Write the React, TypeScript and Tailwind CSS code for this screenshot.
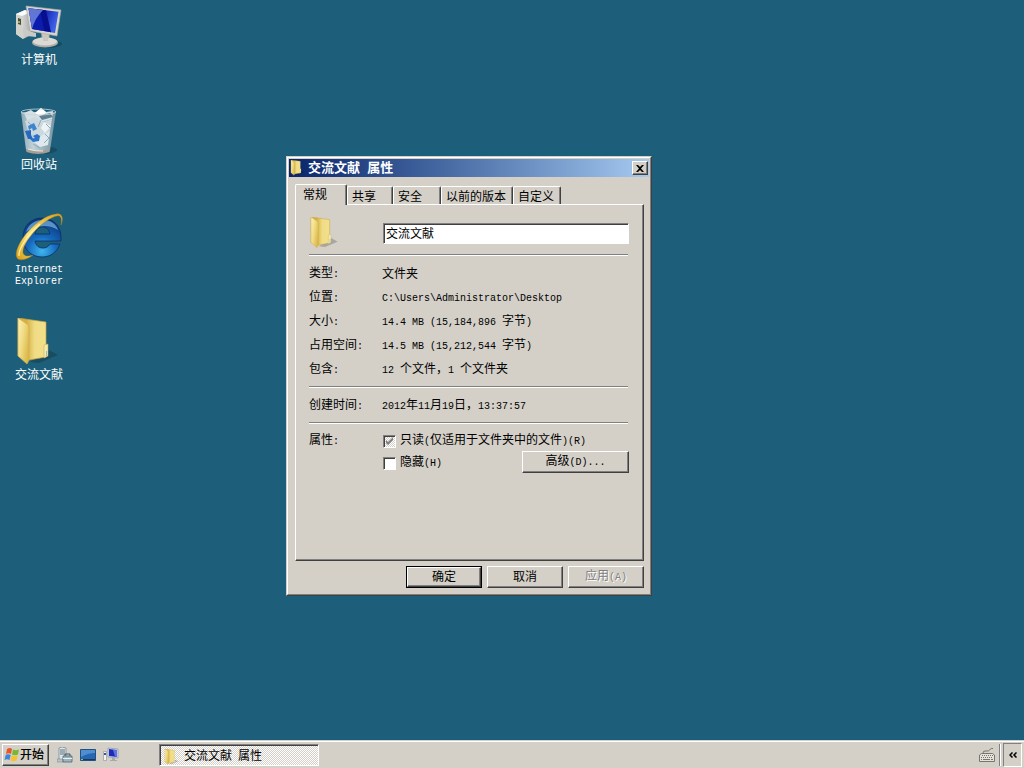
import { Fragment } from "react";
import type { ReactNode } from "react";

// Latin runs are set half as wide as the Chinese characters
const Mixed = ({ text }: { text: string }) => (
  <span className="whitespace-pre">
    {text.split(/([\x20-\x7e]+)/).map((part, i) =>
      i % 2 ? (
        <span key={i} className="font-['Liberation_Mono',monospace] text-[10px]">
          {part}
        </span>
      ) : (
        <Fragment key={i}>{part}</Fragment>
      )
    )}
  </span>
);

const ComputerIcon = () => (
  <svg viewBox="0 0 48 48" className="size-12" aria-hidden="true">
    <defs>
      <linearGradient id="screen" x1="0" y1="0" x2="1" y2="0.3">
        <stop offset="0" stopColor="#1a2fb4" />
        <stop offset="0.45" stopColor="#0a16a4" />
        <stop offset="1" stopColor="#3d62e6" />
      </linearGradient>
      <linearGradient id="tower" x1="0" y1="0" x2="1" y2="0">
        <stop offset="0" stopColor="#f4f4f2" />
        <stop offset="1" stopColor="#a9aaa8" />
      </linearGradient>
    </defs>
    <ellipse cx="33" cy="41" rx="14" ry="4" fill="#0d3c50" opacity="0.5" />
    <path d="M1 11 10 7 16 9V32L8 36 1 31Z" fill="url(#tower)" />
    <path d="M1 11 7 13 8 36 1 31Z" fill="#d2d2cc" />
    <path d="M1 11 7 13 16 9 10 7Z" fill="#fafafa" />
    <path d="M3 15 6 16V22L3 21Z" fill="#4a4d48" />
    <circle cx="4" cy="19" r="1" fill="#a5d62c" />
    <path d="M8 24 14 28 21 30V34L12 33 8 30Z" fill="#c9c9c6" />
    <path d="M26 29H35L34 37H27Z" fill="#b4b2ac" />
    <ellipse cx="30" cy="39.500" rx="13" ry="5" fill="#aeaca6" />
    <ellipse cx="30" cy="38.500" rx="12" ry="4" fill="#dcdad4" />
    <path d="M27 30H34L33 38H28Z" fill="#c9c7c0" />
    <path d="M11 3 46 7 42 33 15 28Z" fill="#d8d5cc" stroke="#a5a8a6" strokeWidth="0.6" />
    <path d="M13.500 5.200 43.500 8.800 40 30 17 26Z" fill="url(#screen)" />
    <path d="M13.500 5.200 25 6.600 29 28 17 26Z" fill="#0b1cae" />
    <path d="M25 6.600 31 7.300 36 29.300 29 28Z" fill="#080f8e" />
    <path d="M13.500 5.200 28 7Q20 15 17 26Z" fill="#a7c0f4" opacity="0.55" />
  </svg>
);

const RecycleIcon = () => (
  <svg viewBox="0 0 48 48" className="size-12" aria-hidden="true">
    <defs>
      <linearGradient id="bin" x1="0" y1="0" x2="1" y2="0">
        <stop offset="0" stopColor="#9fb6c1" />
        <stop offset="0.35" stopColor="#dfe7eb" />
        <stop offset="1" stopColor="#7f99a6" />
      </linearGradient>
    </defs>
    <ellipse cx="27" cy="42" rx="15" ry="4" fill="#0d3c50" opacity="0.5" />
    <path d="M6 4 11 42Q23 48 35 42L41 4Z" fill="url(#bin)" opacity="0.85" />
    <path d="M9 5 16 2 20 5 26 0 31 4 38 3 37 11 24 15 12 12Z" fill="#d5e0e5" />
    <path d="M20 5 26 0 31 4 27 9Z" fill="#fff" />
    <path d="M24 8 35 5 38 9 27 12Z" fill="#5c8192" />
    <path d="M10 13 20 9 29 14 37 11 35 23 26 28 14 26Z" fill="#cbd9df" />
    <path d="M29 14 36 18 30 25 26 20Z" fill="#eef3f5" />
    <path d="M27 27 35 23 33 37 25 39 19 34Z" fill="#dfe8ec" />
    <path d="M30 26 34 30 29 35M13 14 20 20M26 12 23 19M31 16 35 20M18 36 25 40" fill="none" stroke="#8eabb8" />
    <ellipse cx="23.500" cy="4" rx="17.500" ry="3" fill="none" stroke="#c3d4db" strokeWidth="0.8" />
    <path d="M13 18 19 15 22 21 18 23 17 20 14 22Z" fill="#3f84cf" />
    <path d="M10 23 16 22 16 27 18 31 13 31Z" fill="#2568bd" />
    <path d="M18 28 22 26 25 28 24 33 18 34 15 31 20 30Z" fill="#2d74c8" />
    <path d="M11 41Q23 45 35 41L34.500 44Q23 48 11.500 44Z" fill="#a59e96" />
    <path d="M13 41Q21 43.500 28 43" fill="none" stroke="#eee9e2" />
  </svg>
);

const ExplorerIcon = () => (
  <svg viewBox="0 0 48 48" className="size-12" aria-hidden="true">
    <defs>
      <radialGradient id="ie" cx="0.5" cy="0.85" r="0.85">
        <stop offset="0" stopColor="#3fb6ee" />
        <stop offset="0.45" stopColor="#1569bd" />
        <stop offset="1" stopColor="#0b3378" />
      </radialGradient>
      <linearGradient id="ring" x1="0" y1="1" x2="1" y2="0">
        <stop offset="0" stopColor="#d79a12" />
        <stop offset="0.4" stopColor="#fbe47c" />
        <stop offset="1" stopColor="#d8a21c" />
      </linearGradient>
    </defs>
    <path
      fillRule="evenodd"
      d="M27 5C38 5 46 13 46 24V28H20C21 33 24 35 28 35C31 35 33 34 35 31H45C42 39 36 44 27 44C16 44 8 36 8 24.500C8 13 16 5 27 5ZM20 21H35C34 16 31 14 27.500 14C24 14 21 16 20 21Z"
      fill="url(#ie)"
      stroke="#0a2e68"
      strokeWidth="0.8"
    />
    <path d="M11 19C14 10 21 7 28 7C36 7 41 11 43 17C34 11 21 12 11 19Z" fill="#9bd4f3" opacity="0.55" />
    <path
      d="M46 12C49 5 47 0 41 1C31 2 17 12 8 25C2 34 -1 43 3 46C6 48 13 46 18 42C12 44 9 43 8 40C7 35 12 27 19 19C27 10 36 4 42 3C46 2 47 6 46 12Z"
      fill="url(#ring)"
      stroke="#a9801b"
      strokeWidth="0.4"
    />
    <path d="M4 43C3 36 14 20 25 11" fill="none" stroke="#fff3ab" strokeWidth="1.200" />
  </svg>
);

const FolderIcon = ({ className }: { className: string }) => (
  <svg viewBox="0 0 48 48" className={className} aria-hidden="true">
    <defs>
      <linearGradient id="cover" x1="0" y1="0" x2="1" y2="0.6">
        <stop offset="0" stopColor="#fcf2b6" />
        <stop offset="0.5" stopColor="#f0dc85" />
        <stop offset="1" stopColor="#dcb94c" />
      </linearGradient>
      <linearGradient id="sheet" x1="0" y1="0" x2="1" y2="0">
        <stop offset="0.3" stopColor="#d6b043" />
        <stop offset="0.6" stopColor="#f0dc84" />
        <stop offset="1" stopColor="#f3e08c" />
      </linearGradient>
    </defs>
    <path d="M15 44 34 32 43 37 24 45Z" fill="#000" opacity="0.2" />
    <path d="M3 0 31 4V39L14 42 3 38Z" fill="url(#sheet)" stroke="#c7a03a" strokeWidth="0.7" />
    <path d="M29 27 33 26V38L29 40Z" fill="#f5e9ae" stroke="#c7a952" strokeWidth="0.5" />
    <path d="M31 33H32V38H31Z" fill="#8cbcd0" />
    <path d="M3 0 12 6Q14 7 14 10V42L12 46 3 38Z" fill="url(#cover)" stroke="#cfae4e" strokeWidth="0.7" />
  </svg>
);

const StartFlag = () => (
  <svg viewBox="0 0 16 16" className="size-4" aria-hidden="true">
    <path d="M3 2Q6 0 8 2L7 7Q4.500 5.500 2 7Z" fill="#e8572a" />
    <path d="M9 2.500Q12 4 15 2.500L14 7.500Q11 9 8 7.500Z" fill="#76b82e" />
    <path d="M1.700 8Q4 6.500 6.700 8L5.500 13Q3 11.500 .5 13Z" fill="#3d86d8" />
    <path d="M7.700 8.500Q10.500 10 13.700 8.500L12.500 13.500Q9.500 15 6.500 13.500Z" fill="#f6c32c" />
  </svg>
);

const ServerIcon = () => (
  <svg viewBox="0 0 16 16" className="size-4" aria-hidden="true">
    <path d="M2 1 5 0 9 1V12L5 14 2 12Z" fill="#dfe4e6" stroke="#71838b" strokeWidth="0.7" />
    <path d="M3 3H8M3 5H8M3 7H8" stroke="#587482" />
    <path d="M0 12H6V15H0Z" fill="#b9c4c8" stroke="#71838b" strokeWidth="0.5" />
    <path d="M8 9V7H13V9" fill="none" stroke="#3e5662" />
    <path d="M6 9H15V15H6Z" fill="#a0b4bd" stroke="#4b6573" strokeWidth="0.8" />
    <path d="M6 11.500H15" stroke="#e6eef0" />
  </svg>
);

const DesktopIcon = () => (
  <svg viewBox="0 0 16 16" className="size-4" aria-hidden="true">
    <path d="M0.500 2.500H15.500V13.500H0.500Z" fill="#2566b5" stroke="#264f7d" />
    <path d="M1 3H15V6Q8 6 1 10Z" fill="#4f8fd0" />
    <path d="M1 12H15V13H1Z" fill="#17385f" />
    <path d="M1 12H3V13H1Z" fill="#71d06a" />
  </svg>
);

const RemoteIcon = () => (
  <svg viewBox="0 0 16 16" className="size-4" aria-hidden="true">
    <path d="M0.500 4.500H3.500V13.500H0.500Z" fill="#f2f2f0" stroke="#999" strokeWidth="0.700" />
    <path d="M1 6H3V8H1Z" fill="#3551a8" />
    <path d="M5 1 15 2V11L5 10Z" fill="#d7dae8" stroke="#8588a8" strokeWidth="0.6" />
    <path d="M6 2 14 3V10L6 9Z" fill="#1b2cb8" />
    <path d="M10 3 14 3V10L12 9.500Z" fill="#5b75e0" />
    <path d="M9 11H12V13H14V14H7V13H9Z" fill="#a8aaa8" />
  </svg>
);

const KeyboardIcon = () => (
  <svg viewBox="0 0 16 16" className="size-4" fill="none" stroke="#77756f" aria-hidden="true">
    <path d="M4 6Q4 3.500 7 4Q10 4.500 11 2.500Q12 1 14 1.500" />
    <path d="M2.500 6.500H13.500L15.500 8V14.500H0.500V8Z" fill="#e5e2dc" />
    <path d="M3 8.500H14M2 10.500H14" strokeDasharray="1 1" />
    <path d="M2 12.500H3M4 12.500H11M12 12.500H14" />
  </svg>
);

const desktopItems: { name: string; icon: ReactNode }[] = [
  { name: "计算机", icon: <ComputerIcon /> },
  { name: "回收站", icon: <RecycleIcon /> },
  { name: "Internet Explorer", icon: <ExplorerIcon /> },
  { name: "交流文献", icon: <FolderIcon className="size-12" /> },
];

const tabs = [
  { name: "共享", width: "w-[46px]" },
  { name: "安全", width: "w-12" },
  { name: "以前的版本", width: "w-[72px]" },
  { name: "自定义", width: "w-12" },
];

const details = [
  ["类型:", "文件夹"],
  ["位置:", "C:\\Users\\Administrator\\Desktop"],
  ["大小:", "14.4 MB (15,184,896 字节)"],
  ["占用空间:", "14.5 MB (15,212,544 字节)"],
  ["包含:", "12 个文件，1 个文件夹"],
];

const raised =
  "border border-t-white border-l-white border-r-[#404040] border-b-[#404040] bg-[#d4d0c8] shadow-[inset_-1px_-1px_0_#808080]";
const sunken =
  "border border-t-[#808080] border-l-[#808080] border-r-white border-b-white shadow-[inset_1px_1px_0_#404040]";
const dither = "bg-[repeating-conic-gradient(#ffffff_0%_25%,#d4d0c8_0%_50%)] bg-[length:2px_2px]";

const Divider = () => <hr className="h-0.5 border-t border-b border-t-[#808080] border-b-white" />;

const DetailRow = ({ label, value }: { label: string; value: string }) => (
  <div className="flex h-6 items-center">
    <dt className="w-[73px] shrink-0">
      <Mixed text={label} />
    </dt>
    <dd>
      <Mixed text={value} />
    </dd>
  </div>
);

const CheckRow = ({ label, checked = false }: { label: string; checked?: boolean }) => (
  <label className="flex h-[22px] items-center gap-1 pt-0.5">
    <span className="grid size-[13px]">
      <input
        type="checkbox"
        defaultChecked={checked}
        className={`col-start-1 row-start-1 size-[13px] appearance-none ${sunken} ${checked ? dither : "bg-white"}`}
      />
      {checked && (
        <svg viewBox="0 0 13 13" className="pointer-events-none col-start-1 row-start-1" aria-hidden="true">
          <path d="M3 5V8L5 10 10 5V2L5 7Z" fill="#808080" />
        </svg>
      )}
    </span>
    <Mixed text={label} />
  </label>
);

const PropertiesDialog = () => (
  <section
    role="dialog"
    aria-labelledby="dialog-title"
    className="absolute top-[156px] left-[286px] w-[366px] border border-t-[#d4d0c8] border-r-[#404040] border-b-[#404040] border-l-[#d4d0c8]"
  >
    <div className="border border-t-white border-r-[#808080] border-b-[#808080] border-l-white bg-[#d4d0c8] p-px">
      <header className="flex h-[18px] items-center bg-linear-to-r from-[#0a246a] to-[#a6caf0] pr-px pl-px">
        <FolderIcon className="size-4" />
        <h1 id="dialog-title" className="ml-0.5 flex-1 text-[13px] font-bold whitespace-pre text-white">
          交流文献&nbsp; 属性
        </h1>
        <button type="button" aria-label="关闭" className={`flex h-3.5 w-4 items-center justify-center ${raised}`}>
          <svg viewBox="0 0 8 7" className="h-[7px] w-2" aria-hidden="true">
            <path d="M0 0H2L4 2 6 0H8L5 3.500 8 7H6L4 5 2 7H0L3 3.500Z" fill="#000" />
          </svg>
        </button>
      </header>

      <div className="pt-[7px] pr-[5px] pb-[5px] pl-1.5">
        <div role="tablist" className="flex items-end">
          <button
            type="button"
            role="tab"
            aria-selected="true"
            className="z-10 -mb-px h-[21px] w-[52px] rounded-t-[2px] border border-b-0 border-t-white border-r-[#404040] border-l-white bg-[#d4d0c8] pl-[7px] text-left shadow-[inset_-1px_0_0_#808080]"
          >
            常规
          </button>
          {tabs.map((tab) => (
            <button
              key={tab.name}
              type="button"
              role="tab"
              aria-selected="false"
              className={`h-[18px] ${tab.width} rounded-t-[2px] border border-b-0 border-t-white border-r-[#404040] border-l-white pt-0.5 pl-1 text-left whitespace-nowrap shadow-[inset_-1px_0_0_#808080]`}
            >
              {tab.name}
            </button>
          ))}
        </div>

        <div
          role="tabpanel"
          className="h-[357px] border border-t-white border-r-[#404040] border-b-[#404040] border-l-white pr-[15px] pl-[13px] shadow-[inset_-1px_-1px_0_#808080]"
        >
          <div className="flex h-[49px] items-center">
            <div className="w-[74px] shrink-0 pt-1.5">
              <FolderIcon className="size-8" />
            </div>
            <input
              type="text"
              aria-label="名称"
              defaultValue="交流文献"
              className={`-mr-px mt-2 h-[21px] min-w-0 flex-1 bg-white pb-0.5 pl-0.5 outline-none ${sunken}`}
            />
          </div>
          <Divider />
          <dl className="pt-1.5 pb-1">
            {details.map(([label, value]) => (
              <DetailRow key={label} label={label} value={value} />
            ))}
          </dl>
          <Divider />
          <dl className="pt-1.5 pb-1">
            <DetailRow label="创建时间:" value="2012年11月19日，13:37:57" />
          </dl>
          <Divider />
          <fieldset className="flex pt-[5px]">
            <div className="flex h-[22px] w-[74px] shrink-0 items-center pt-0.5">
              <Mixed text="属性:" />
            </div>
            <div className="flex-1">
              <CheckRow label="只读(仅适用于文件夹中的文件)(R)" checked />
              <div className="-mr-px flex justify-between">
                <CheckRow label="隐藏(H)" />
                <button type="button" className={`h-[22px] w-[107px] ${raised}`}>
                  <Mixed text="高级(D)..." />
                </button>
              </div>
            </div>
          </fieldset>
        </div>

        <footer className="mt-[5px] flex justify-end gap-[5px]">
          <div className="border border-black">
            <button type="button" className={`block h-5 w-[74px] ${raised}`}>
              确定
            </button>
          </div>
          <button type="button" className={`h-[22px] w-[76px] ${raised}`}>
            取消
          </button>
          <button
            type="button"
            disabled
            className={`h-[22px] w-[76px] text-[#808080] [text-shadow:1px_1px_0_#fff] ${raised}`}
          >
            <Mixed text="应用(A)" />
          </button>
        </footer>
      </div>
    </div>
  </section>
);

const Taskbar = () => (
  <footer className="border-t border-[#d4d0c8] bg-[#d4d0c8]">
    <div className="flex h-[27px] items-center border-t border-white pr-0.5 pl-0.5">
      <button type="button" className={`flex h-[22px] w-[47px] items-center pl-px font-medium ${raised}`}>
        <StartFlag />
        <span className="whitespace-nowrap">开始</span>
      </button>
      <nav aria-label="快速启动" className="ml-2 flex w-[102px] gap-[7px]">
        <button type="button" aria-label="服务器管理器">
          <ServerIcon />
        </button>
        <button type="button" aria-label="显示桌面">
          <DesktopIcon />
        </button>
        <button type="button" aria-label="远程桌面">
          <RemoteIcon />
        </button>
      </nav>
      <button type="button" className={`flex h-[22px] w-40 items-center gap-1 pt-1 pl-1 ${sunken} ${dither}`}>
        <FolderIcon className="size-4" />
        <Mixed text="交流文献 属性" />
      </button>
      <div className="ml-auto flex items-center">
        <button type="button" aria-label="输入法">
          <KeyboardIcon />
        </button>
        <div className="ml-1 h-[22px] w-0.5 border-r border-l border-r-white border-l-[#808080]" />
        <button
          type="button"
          aria-label="显示更多图标"
          className="ml-0.5 flex h-6 w-[19px] items-center justify-center border border-t-[#808080] border-r-white border-b-white border-l-[#808080]"
        >
          <svg viewBox="0 0 8 6" className="h-1.5 w-2" fill="none" stroke="#000" strokeWidth="1.500" aria-hidden="true">
            <path d="M3.500 0.500 1 3 3.500 5.500M7.500 0.500 5 3 7.500 5.500" />
          </svg>
        </button>
      </div>
    </div>
  </footer>
);

export default function App() {
  return (
    <div className="flex h-screen flex-col bg-[#1d5f7a] font-['Liberation_Sans','Noto_Sans_CJK_SC',sans-serif] text-[12px] leading-3 text-black">
      <main className="relative flex-1">
        <ul className="w-[78px] pt-[3px]">
          {desktopItems.map((item) => (
            <li key={item.name} className="h-[105px]">
              <a href="#" className="flex flex-col items-center gap-[3px] text-center text-white">
                {item.icon}
                {item.name.split(" ").length > 1 ? (
                  <span className="w-16 font-['Liberation_Mono',monospace] text-[10px]">{item.name}</span>
                ) : (
                  <span>{item.name}</span>
                )}
              </a>
            </li>
          ))}
        </ul>
        <PropertiesDialog />
      </main>
      <Taskbar />
    </div>
  );
}
